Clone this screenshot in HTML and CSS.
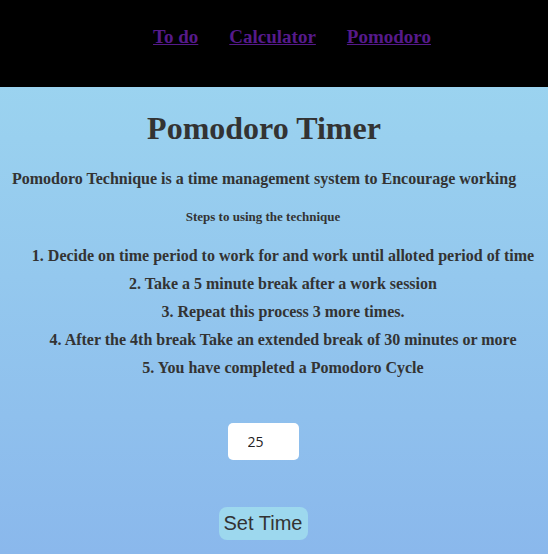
FILE: index.html
```html
<!DOCTYPE html>
<html>
<head>
<meta charset="utf-8">
<link rel="stylesheet" href="styles.css">
</head>
<body>
<header class="topbar">
  <nav class="nav">
    <a class="nav-link" href="#">To do</a>
    <a class="nav-link" href="#">Calculator</a>
    <a class="nav-link" href="#">Pomodoro</a>
  </nav>
</header>
<main class="content">
  <h1 class="title">Pomodoro Timer</h1>
  <p class="intro">Pomodoro Technique is a time management system to Encourage working</p>
  <h5 class="steps-title">Steps to using the technique</h5>
  <div class="steps">
    <p class="step">1. Decide on time period to work for and work until alloted period of time</p>
    <p class="step">2. Take a 5 minute break after a work session</p>
    <p class="step">3. Repeat this process 3 more times.</p>
    <p class="step">4. After the 4th break Take an extended break of 30 minutes or more</p>
    <p class="step">5. You have completed a Pomodoro Cycle</p>
  </div>
  <div class="timer-input-row">
    <input class="time-input" type="text" value="25">
  </div>
  <div class="button-row">
    <button class="set-btn">Set Time</button>
  </div>
</main>
</body>
</html>
```
FILE: styles.css
```css
html, body {
  margin: 0;
  padding: 0;
}
body {
  font-family: "Liberation Serif", "Times New Roman", serif;
  color: #333;
  background: linear-gradient(to bottom, #9ed8f0, #8ab8ec);
  min-height: 554px;
}
.topbar {
  background: #000;
  height: 87px;
  display: flex;
  justify-content: center;
}
.nav {
  display: flex;
  gap: 31px;
  padding-top: 26px;
  padding-left: 36px;
  align-items: flex-start;
}
.nav-link {
  color: #551a8b;
  font-weight: bold;
  font-size: 19px;
}
.content {
  display: flex;
  flex-direction: column;
}
.title {
  margin: 21px 0 0 0;
  font-size: 32px;
  text-align: center;
  padding-right: 20px;
  line-height: 40px;
}
.intro {
  margin: 21px 0 0 12px;
  font-size: 16px;
  font-weight: bold;
  line-height: 20px;
}
.steps-title {
  margin: 20px 0 0 0;
  font-size: 13px;
  text-align: center;
  padding-right: 22px;
  line-height: 16px;
}
.steps {
  margin-top: 22px;
  display: flex;
  flex-direction: column;
  gap: 10px;
}
.step {
  margin: 0;
  font-weight: bold;
  text-align: center;
  line-height: 18px;
  font-size: 16px;
  padding-left: 18px;
}
.timer-input-row {
  display: flex;
  justify-content: center;
  margin-top: 46px;
}
.time-input {
  width: 71px;
  height: 37px;
  box-sizing: border-box;
  border: none;
  border-radius: 5px;
  background: #fff;
  font-family: "Open Sans", sans-serif;
  font-size: 14px;
  color: #222;
  padding: 0 0 0 20px;
  margin-left: -22px;
}
.button-row {
  display: flex;
  justify-content: center;
  margin-top: 47px;
}
.set-btn {
  width: 89px;
  height: 33px;
  border: none;
  border-radius: 8px;
  background: #9dd8ee;
  color: #333;
  font-family: "Liberation Sans", Arial, sans-serif;
  font-size: 20px;
  padding: 0;
  margin-left: -22px;
}
```
